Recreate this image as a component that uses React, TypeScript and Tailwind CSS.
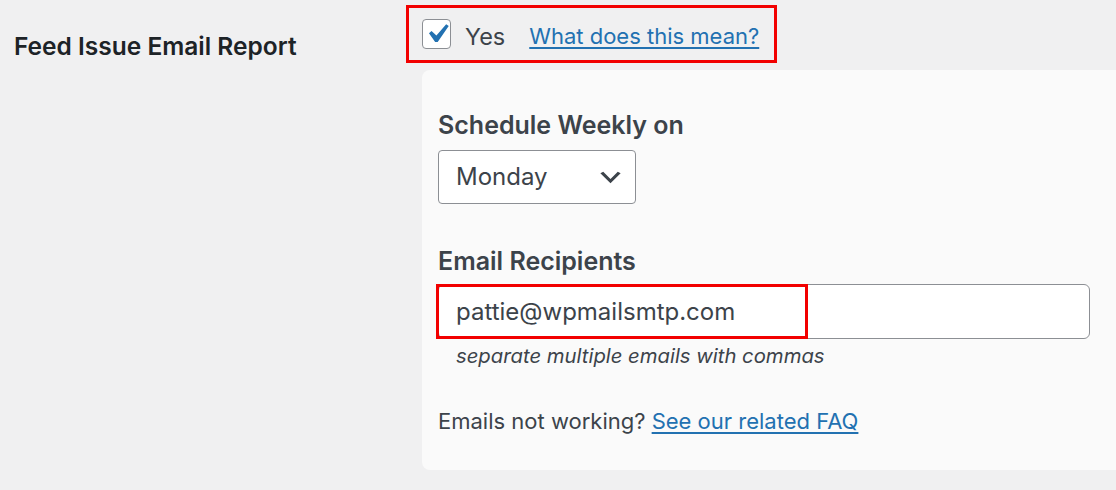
import React from 'react'

const Checkbox = () => (
  <span className="flex h-[30px] w-[29px] items-center justify-center rounded-[4px] border border-[#8c8f94] bg-white">
    <svg viewBox="0 0 20 20" className="h-[38px] w-[38px] shrink-0">
      <path d="M14.83 4.89l1.34.94-5.81 8.38H9.02L5.78 9.67l1.34-1.25 2.57 2.4z" fill="#2271b1" />
    </svg>
  </span>
)

const Chevron = () => (
  <svg viewBox="0 0 20 20" className="h-[29px] w-[29px]">
    <path d="M5 6l5 5 5-5 2 1-7 7-7-7 2-1z" fill="#3c434a" />
  </svg>
)

export default function App() {
  return (
    <div className="flex h-[490px] w-[1116px] overflow-hidden bg-[#f0f0f1] font-['Inter','Liberation_Sans',sans-serif] text-[#3c434a]">
      <div className="w-[406px] shrink-0 pl-[14px] pt-[31px]">
        <h2 className="text-[24.5px] font-semibold leading-[30px] text-[#1d2327]">Feed Issue Email Report</h2>
      </div>

      <div className="flex-1 pt-[5px]">
        <div className="flex h-[58px] w-[371px] items-center border-[3px] border-[#f20000] pl-[13px]">
          <Checkbox />
          <span className="ml-[14px] pt-[5px] text-[23.5px] leading-[30px]">Yes</span>
          <a href="#" className="ml-[24px] pt-[3px] text-[22px] leading-[30px] text-[#2271b1] underline underline-offset-[3px]">
            What does this mean?
          </a>
        </div>

        <div className="mt-[7px] ml-[16px] h-[400px] rounded-l-lg bg-[#fafafa] pl-[16px] pt-[40px]">
          <label className="block text-[25px] font-semibold leading-[30px] text-[#3c434a]">Schedule Weekly on</label>
          <div className="mt-[10px] flex h-[54px] w-[198px] items-center justify-between rounded-[4px] border border-[#8c8f94] bg-white pl-[17px] pr-[10px]">
            <span className="text-[24px]">Monday</span>
            <Chevron />
          </div>

          <label className="mt-[42px] block text-[25px] font-semibold leading-[30px] text-[#3c434a]">Email Recipients</label>
          <div className="relative mt-[8px] w-[652px]">
            <div className="flex h-[55px] items-center rounded-[6px] border border-[#8c8f94] bg-white pl-[17px] text-[24px]">
              pattie@wpmailsmtp.com
            </div>
            <div className="absolute -left-[2px] top-0 h-[55px] w-[372px] border-[3px] border-[#f20000]" />
          </div>
          <p className="mt-[4px] pl-[18px] text-[20.3px] italic leading-[26px] text-[#3c434a]">separate multiple emails with commas</p>

          <p className="mt-[37px] text-[22px] leading-[30px]">
            Emails not working?{' '}
            <a href="#" className="text-[#2271b1] underline underline-offset-[3px]">See our related FAQ</a>
          </p>
        </div>
      </div>
    </div>
  )
}
